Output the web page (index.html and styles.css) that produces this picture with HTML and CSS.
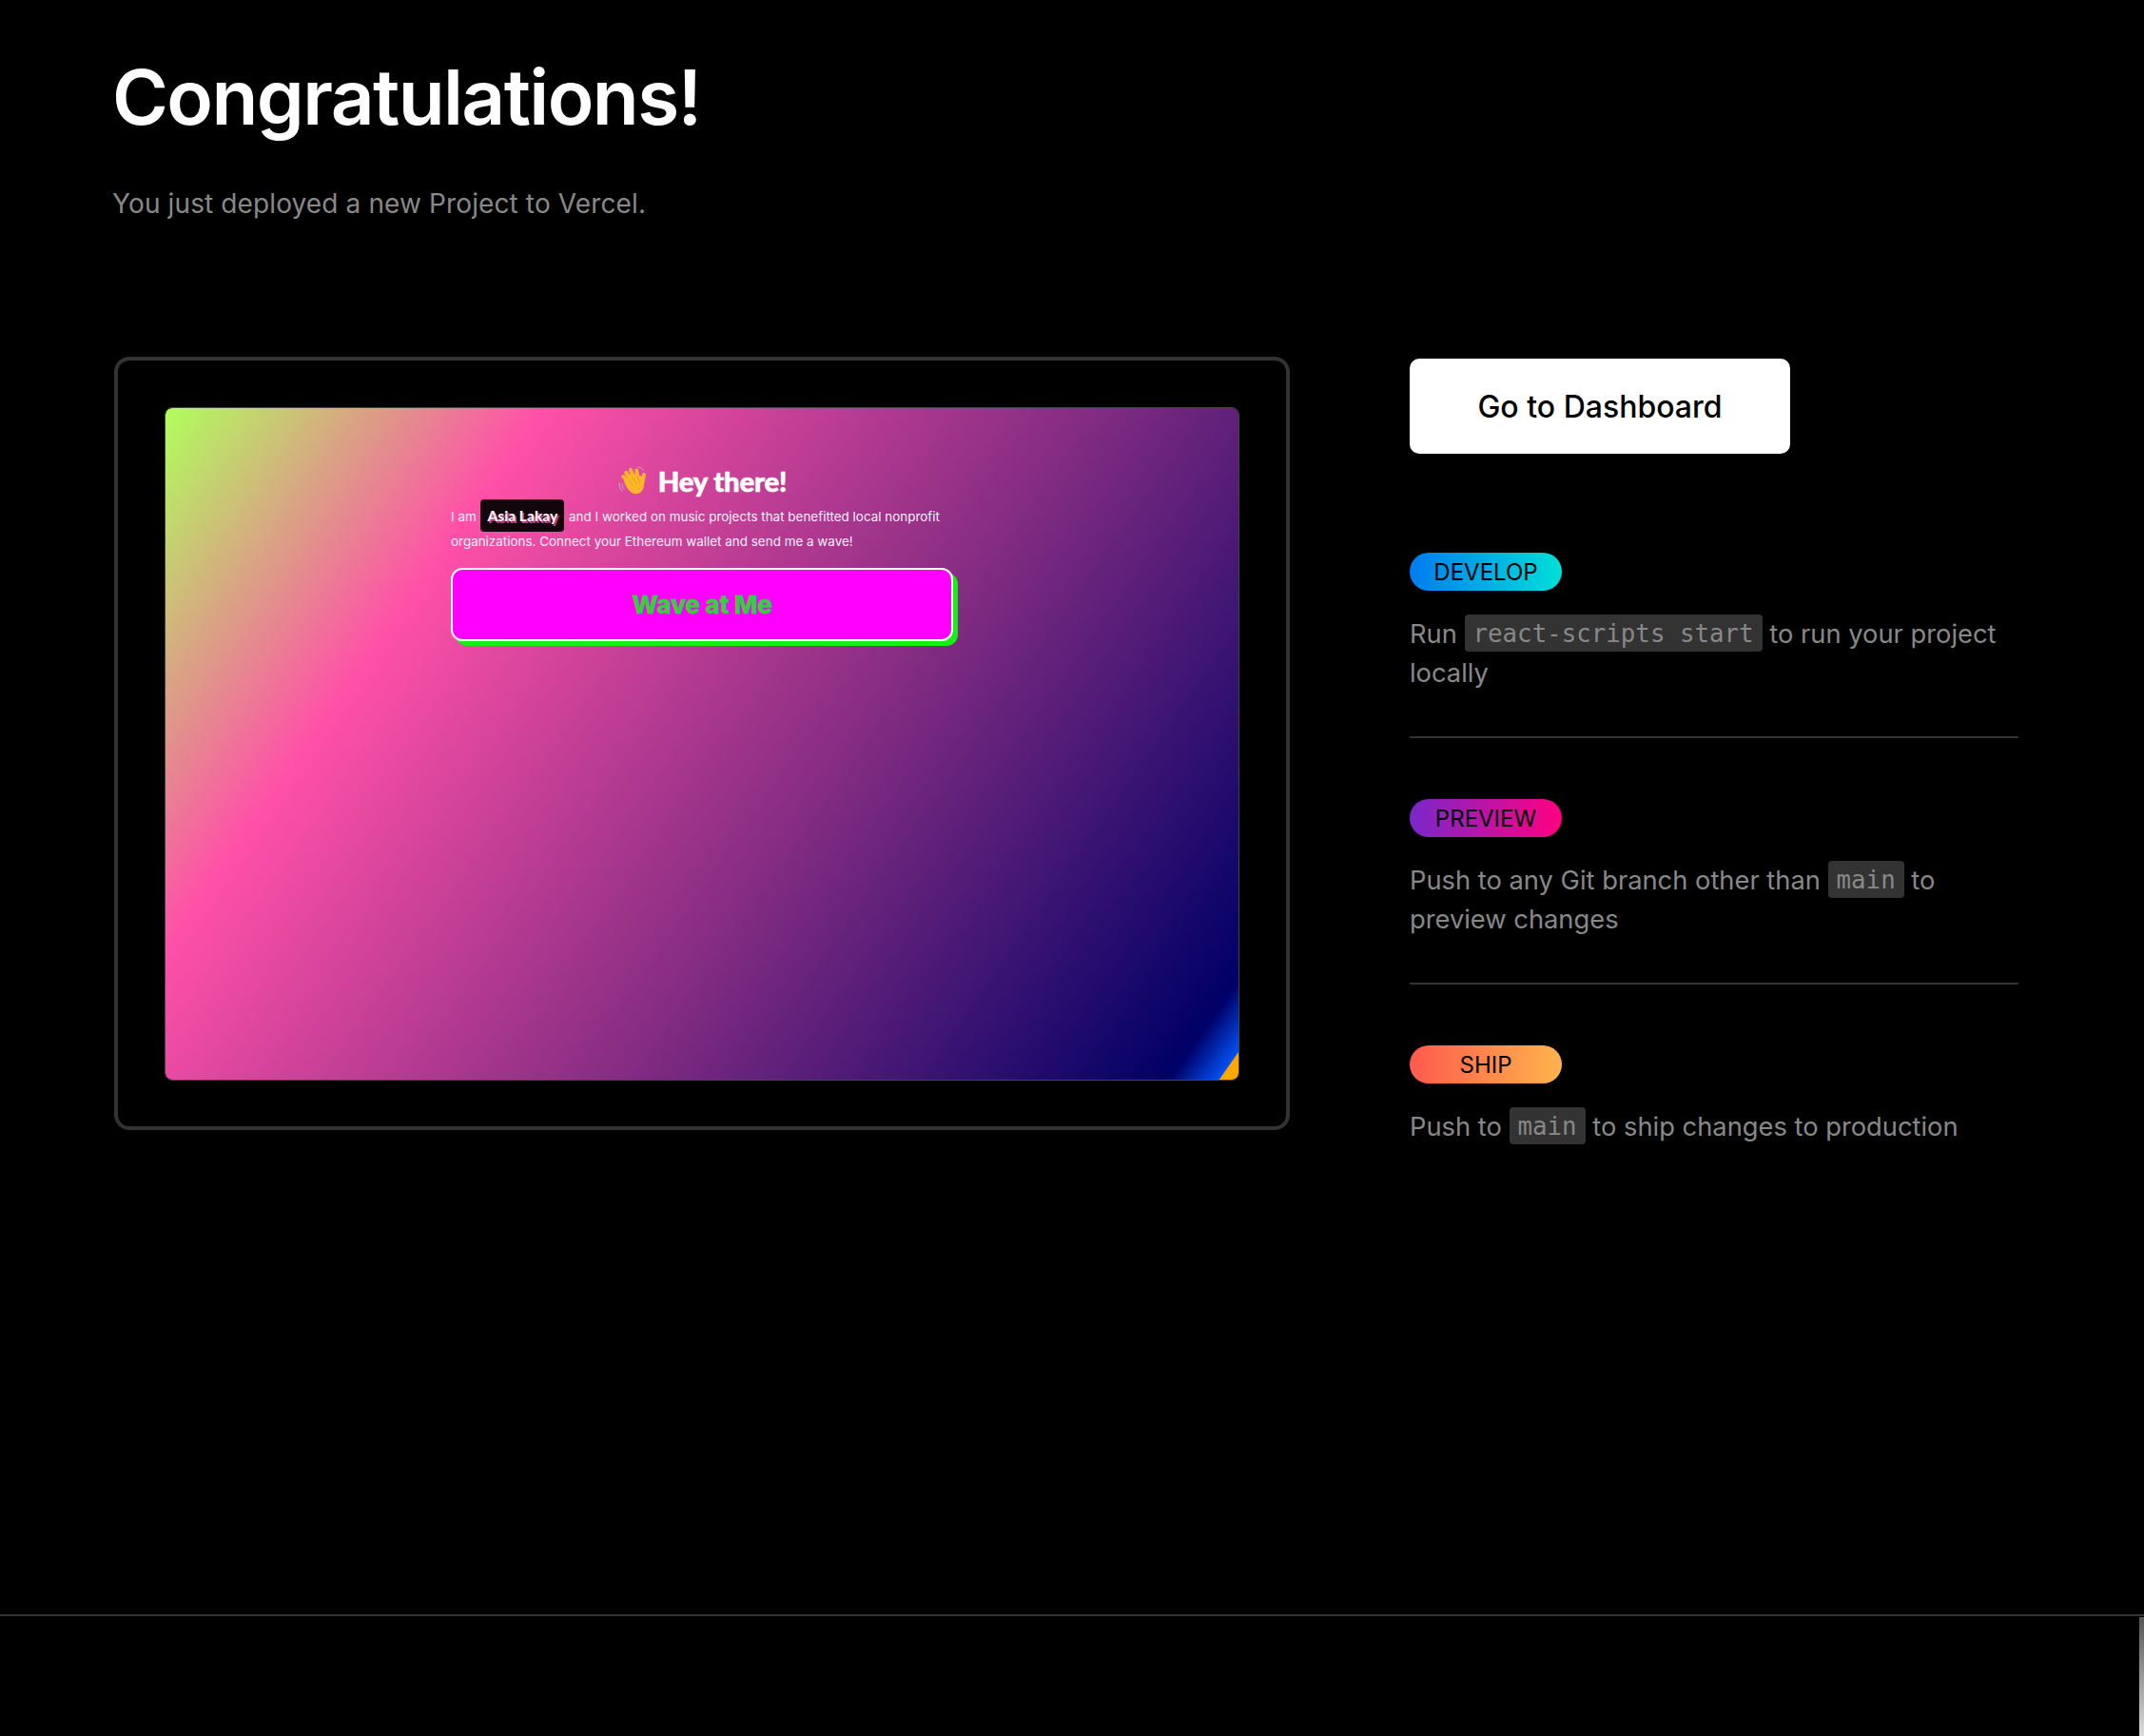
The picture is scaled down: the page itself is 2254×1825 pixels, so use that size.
FILE: index.html
```html
<!DOCTYPE html>
<html lang="en">
<head>
<meta charset="utf-8">
<title>Congratulations!</title>
<link rel="stylesheet" href="styles.css">
</head>
<body>
<main class="main">
  <header class="head">
    <h1 class="title">Congratulations!</h1>
    <p class="subtitle">You just deployed a new Project to Vercel.</p>
  </header>
  <section class="columns">
    <div class="frame">
      <div class="screen">
        <div class="app">
          <div class="hey">
            <svg class="wave-icon" viewBox="0 0 32 32" aria-hidden="true">
              <g fill="none" stroke="#b9b3c8" stroke-width="1" stroke-linecap="round">
                <path d="M2 19c0 3 1 6 3 8"/>
                <path d="M5 20c0 2 .6 3.5 2 5"/>
                <path d="M22 2c2 0 4 1 5 3"/>
              </g>
              <g fill="#fcb62a">
                <path d="M7 17 L15 8 L26 12 L28 21 C28 27 23 31 18 30 C13 29 9 23 7 17Z"/>
                <rect x="7.5" y="9" width="4" height="14" rx="2" transform="rotate(-38 9.5 16)"/>
                <rect x="10" y="5" width="4" height="15" rx="2" transform="rotate(-30 12 12.5)"/>
                <rect x="14" y="2.5" width="4" height="15" rx="2" transform="rotate(-22 16 10)"/>
                <rect x="19" y="3.5" width="4" height="14" rx="2" transform="rotate(-10 21 10)"/>
                <rect x="25" y="8" width="4" height="15" rx="2" transform="rotate(10 27 15)"/>
              </g>
              <path d="M12 16l5 6M16 13l5 7M21 12l3 7" fill="none" stroke="#e8960f" stroke-width=".8"/>
            </svg>
            <span>Hey there!</span>
          </div>
          <p class="bio">I am <span class="name">Asia Lakay</span> and I worked on music projects that benefitted local nonprofit organizations. Connect your Ethereum wallet and send me a wave!</p>
          <button class="wave-btn" type="button">Wave at Me</button>
        </div>
      </div>
    </div>
    <aside class="side">
      <a class="dash" href="#">Go to Dashboard</a>
      <ul class="steps">
        <li class="step">
          <span class="pill pill-develop">DEVELOP</span>
          <p class="desc">Run <code class="code">react-scripts start</code> to run your project locally</p>
        </li>
        <li class="step">
          <span class="pill pill-preview">PREVIEW</span>
          <p class="desc">Push to any Git branch other than <code class="code">main</code> to preview changes</p>
        </li>
        <li class="step">
          <span class="pill pill-ship">SHIP</span>
          <p class="desc">Push to <code class="code">main</code> to ship changes to production</p>
        </li>
      </ul>
    </aside>
  </section>
</main>
<footer class="footer"><span class="thumb"></span></footer>
</body>
</html>
```
FILE: styles.css
```css
* { box-sizing: border-box; }
html, body { margin: 0; height: 100%; }
body {
  background: #000;
  color: #fff;
  font-family: Inter, "Liberation Sans", sans-serif;
  display: flex;
  flex-direction: column;
  height: 1825px;
  overflow: hidden;
}
.main { flex: 1; padding: 0 132px 0 118px; }
.head { padding-top: 54px; height: 375px; }
.title { margin: 0; font-size: 80px; line-height: 96px; font-weight: 600; letter-spacing: -1.6px; }
.subtitle { margin: 44px 0 0; font-size: 28px; line-height: 40px; letter-spacing: .12px; color: #888; }
.columns { display: flex; gap: 126px; align-items: flex-start; }
.frame {
  width: 1236px;
  height: 813px;
  border: 4px solid #333;
  border-radius: 16px;
  padding: 49px;
  flex: none;
  margin-left: 2px;
}
.screen {
  height: 708px;
  border: 1px solid #444;
  border-radius: 8px;
  background: linear-gradient(125deg, #b0ff5c 0%, #ff50a8 24.5%, #7c2a80 62%, #000066 95.5%, #0050f0 98.7%, #ffa800 98.8%) padding-box;
  padding-top: 55px;
}
.app { width: 528px; margin-left: 300px; }
.hey {
  display: flex;
  align-items: center;
  justify-content: center;
  gap: 11px;
  height: 42px;
  font-family: Lato, sans-serif;
  font-weight: 900;
  font-size: 29.3px;
  letter-spacing: -.2px;
  -webkit-text-stroke: .6px #fff;
}
.wave-icon { width: 32px; height: 32px; flex: none; }
.bio { margin: 3px 0 0; font-size: 13.45px; line-height: 26px; color: #fff; opacity: .92; }
.name {
  margin: 0 1px;
  padding: 8px 7px;
  background: #000;
  border-radius: 4px;
  font-family: Lato, sans-serif;
  font-weight: 900;
  font-size: 15.5px;
  text-shadow: 1.5px 1.5px 0 #c7408f;
}
.wave-btn {
  display: block;
  width: 528px;
  height: 77px;
  margin-top: 15px;
  background: #f0f;
  border: 2px solid #fff;
  border-radius: 12px;
  box-shadow: 5px 5px 0 #14f014;
  color: #34cf3c;
  font-family: Inter, sans-serif;
  font-weight: 800;
  font-size: 26.3px;
  letter-spacing: -.3px;
  -webkit-text-stroke: .3px #34cf3c;
}
.side { width: 640px; flex: none; padding-top: 2px; }
.dash {
  display: flex;
  align-items: center;
  justify-content: center;
  width: 400px;
  height: 100px;
  background: #fff;
  color: #000;
  border-radius: 10px;
  font-size: 32px;
  font-weight: 500;
  text-decoration: none;
}
.steps { list-style: none; margin: 104px 0 0; padding: 0; }
.step { padding-bottom: 46px; margin-bottom: 64px; border-bottom: 2px solid #333; }
.step:last-child { border-bottom: 0; margin-bottom: 0; padding-bottom: 0; }
.pill {
  display: block;
  width: 160px;
  height: 40px;
  line-height: 41px;
  border-radius: 20px;
  text-align: center;
  font-size: 24px;
  color: #000;
}
.pill-develop { background: linear-gradient(90deg, #007cf0, #00dfd8); }
.pill-preview { background: linear-gradient(90deg, #7928ca, #ff0080); }
.pill-ship { background: linear-gradient(90deg, #ff5a4d, #ffb44d); }
.desc { margin: 25px 0 0; font-size: 27.3px; line-height: 41px; color: #888; }
.code {
  display: inline-block;
  padding: 0 9px;
  height: 39px;
  line-height: 40px;
  background: #333;
  border-radius: 4px;
  font-family: "DejaVu Sans Mono", monospace;
  font-size: 25.8px;
  vertical-align: top;
}
.footer { position: relative; height: 128px; flex: none; border-top: 2px solid #333; }
.thumb {
  position: absolute;
  right: 0;
  top: 1px;
  width: 5px;
  bottom: 0;
  background: linear-gradient(180deg, #555, #ddd);
}
```
